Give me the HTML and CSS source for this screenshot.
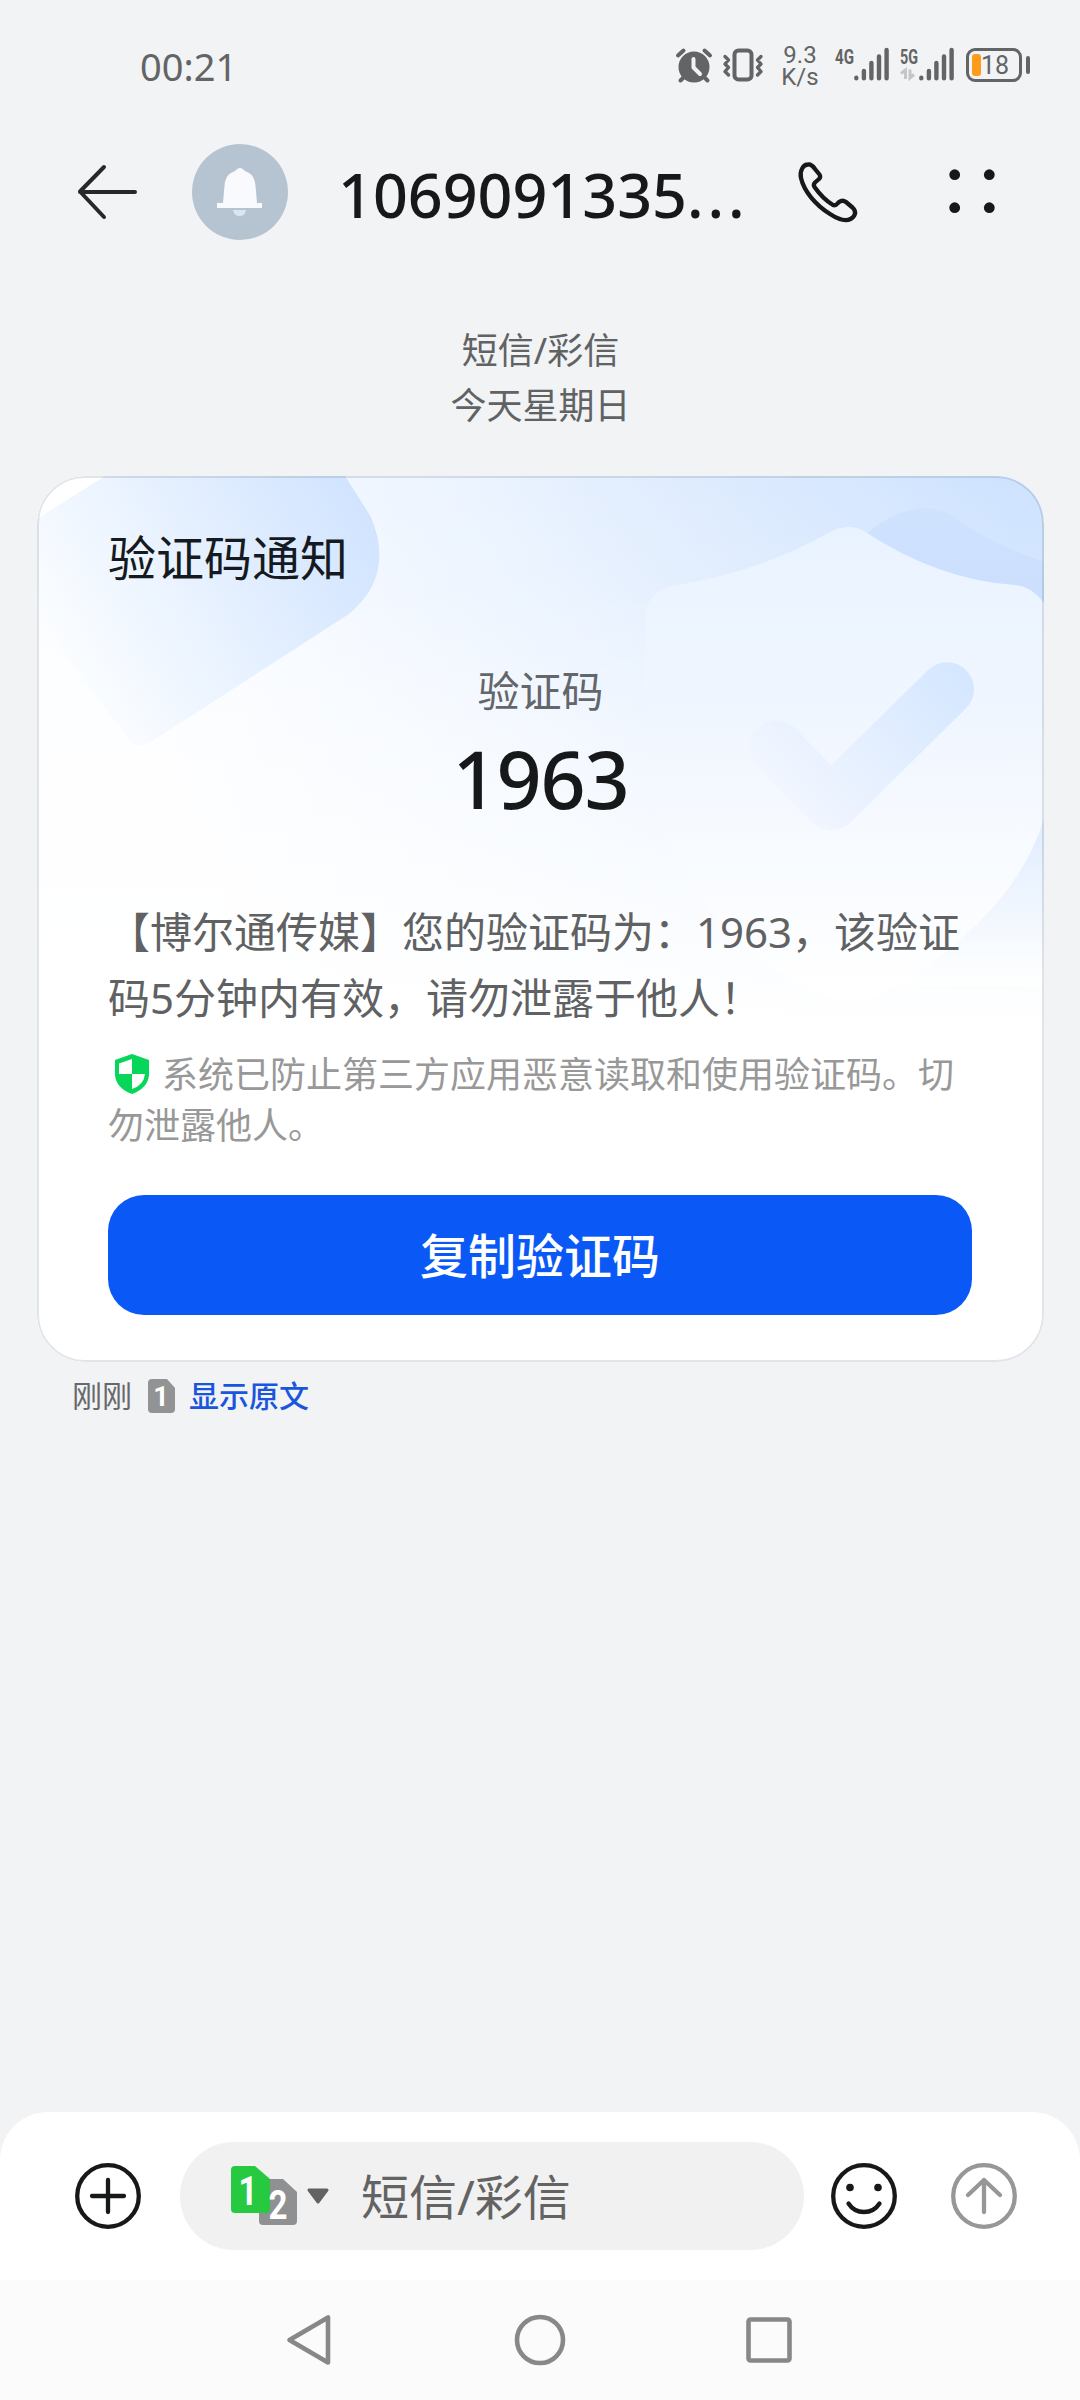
FILE: index.html
```html
<!DOCTYPE html>
<html lang="zh-CN">
<head>
<meta charset="utf-8">
<title>短信</title>
<link rel="stylesheet" href="styles.css">
</head>
<body>
<div class="screen">
  <div class="status">
    <span class="time">00:21</span>
    <div class="status-icons">
      <svg class="alarm" width="36" height="36" viewBox="0 0 36 36">
        <circle cx="18" cy="20" r="15.5" fill="#626465"/>
        <path d="M2 8.5 7.500 3.500M34 8.500 28.500 3.500M8 30 4.500 33.500M28 30 31.500 33.500" stroke="#626465" stroke-width="4" stroke-linecap="round" fill="none"/>
        <path d="M17.500 12V20.500L24 27" stroke="#f1f3f5" stroke-width="4" stroke-linecap="round" stroke-linejoin="round" fill="none"/>
      </svg>
      <svg class="vibrate" width="42" height="36" viewBox="0 0 42 36">
        <rect x="12.500" y="3.500" width="17" height="29" rx="4" fill="none" stroke="#626465" stroke-width="4"/>
        <path d="M3 9.500 6.500 13 3 17 6.500 20.500 3 24.500 6.500 28M39 9.500 35.500 13 39 17 35.500 20.500 39 24.500 35.500 28" fill="none" stroke="#626465" stroke-width="3.400" stroke-linecap="round" stroke-linejoin="round"/>
      </svg>
      <div class="speed"><span>9.3</span><span>K/s</span></div>
      <svg class="signal" width="55" height="36" viewBox="0 0 55 36">
        <text class="net" x="0" y="16.500" textLength="19" lengthAdjust="spacingAndGlyphs">4G</text>
        <path d="M21.300 30.700V31.300M28.900 24V31.300M36.400 16V31.300M44 9.500V31.300M51.600 3V31.300" stroke="#626465" stroke-width="4.400" stroke-linecap="round"/>
      </svg>
      <svg class="signal" width="55" height="36" viewBox="0 0 55 36">
        <text class="net" x="0" y="16.500" textLength="18" lengthAdjust="spacingAndGlyphs">5G</text>
        <path d="M1 26.500 5.500 23V32M10 22.500V31L14 27.500" stroke="#c3c5c7" stroke-width="3" fill="none"/>
        <path d="M21.300 30.700V31.300M28.900 24V31.300M36.400 16V31.300M44 9.500V31.300M51.600 3V31.300" stroke="#626465" stroke-width="4.400" stroke-linecap="round"/>
      </svg>
      <div class="battery"><i class="level"></i><span>18</span></div>
    </div>
  </div>

  <header class="header">
    <svg class="back" width="64" height="60" viewBox="0 0 64 60">
      <path d="M29 5 5 29.500 29 55M5 30H60" fill="none" stroke="#27282a" stroke-width="4" stroke-linecap="round" stroke-linejoin="round"/>
    </svg>
    <svg class="avatar" width="96" height="96" viewBox="0 0 96 96">
      <circle cx="48" cy="48" r="48" fill="#b6c3d1"/>
      <path d="M48 24C51 24 52 27 55 28C61 30 63 36 63.500 42L65 59H70V64H25V59H31L32.500 42C33 36 35 30 41 28C44 27 45 24 48 24Z" fill="#f8fafe"/>
      <path d="M41 66H54Q53 72 47.500 72T41 66Z" fill="#d9e5f6"/>
    </svg>
    <h1 class="number">1069091335<span class="dots">...</span></h1>
    <svg class="phone" width="64" height="64" viewBox="0 0 64 64">
      <path d="M5 18C3.500 11 7 4.500 12 4.500C15.500 4 17 6 19 9L23.500 14.500Q25 17 23 19L19 22.500Q17 24.500 18.500 27Q27 39 37 45Q39.500 46 41.500 43.500L43 42Q46.500 39.500 50 42L56.500 47.500C61.500 52 58.500 57 54.500 59C50 61.500 44 60.500 34 54C19 44.500 8 31 5 18Z" fill="none" stroke="#17181a" stroke-width="4.300" stroke-linejoin="round"/>
    </svg>
    <svg class="more" width="46" height="46" viewBox="0 0 46 46" fill="#17181a">
      <circle cx="5.700" cy="5.700" r="5.400"/><circle cx="40.300" cy="5.700" r="5.400"/><circle cx="5.700" cy="38.700" r="5.400"/><circle cx="40.300" cy="38.700" r="5.400"/>
    </svg>
  </header>

  <main class="thread">
    <div class="meta"><div>短信/彩信</div><div>今天星期日</div></div>

    <section class="card">
      <svg class="art" viewBox="37 476 1007 885" preserveAspectRatio="none">
        <defs>
          <linearGradient id="sky" gradientUnits="userSpaceOnUse" x1="1000" y1="476" x2="150" y2="700">
            <stop offset="0" stop-color="#cfe3ff"/><stop offset=".35" stop-color="#dfecfe"/><stop offset=".6" stop-color="#ecf4ff"/><stop offset="1" stop-color="#fcfdff"/>
          </linearGradient>
          <linearGradient id="fade" x1="0" y1="0" x2="0" y2="1">
            <stop offset="0" stop-color="#fff" stop-opacity="0"/><stop offset=".12" stop-color="#fff" stop-opacity=".12"/><stop offset=".28" stop-color="#fff" stop-opacity=".45"/><stop offset=".62" stop-color="#fff" stop-opacity="1"/>
          </linearGradient>
          <linearGradient id="tile" gradientUnits="userSpaceOnUse" x1="75" y1="680" x2="375" y2="505">
            <stop offset="0" stop-color="#fbfdff"/><stop offset=".5" stop-color="#e5f0ff"/><stop offset="1" stop-color="#d0e3ff"/>
          </linearGradient>
          <linearGradient id="rear" gradientUnits="userSpaceOnUse" x1="0" y1="510" x2="0" y2="985">
            <stop offset="0" stop-color="#cfe2fe"/><stop offset=".2" stop-color="#cbdffe"/><stop offset=".7" stop-color="#e4effe"/><stop offset="1" stop-color="#fff"/>
          </linearGradient>
          <linearGradient id="front" gradientUnits="userSpaceOnUse" x1="0" y1="527" x2="0" y2="990">
            <stop offset="0" stop-color="#e9f3ff"/><stop offset=".4" stop-color="#f0f6ff"/><stop offset=".8" stop-color="#fafcff"/><stop offset="1" stop-color="#fff"/>
          </linearGradient>
          <linearGradient id="tick" gradientUnits="userSpaceOnUse" x1="800" y1="800" x2="950" y2="665">
            <stop offset="0" stop-color="#f0f5ff"/><stop offset="1" stop-color="#d5e7ff"/>
          </linearGradient>
        </defs>
        <rect x="37" y="476" width="1007" height="885" fill="url(#sky)"/>
        <rect x="37" y="476" width="1007" height="885" fill="url(#fade)"/>
        <path d="M37 476H105L37 519Z" fill="#fff"/>
        <path d="M37 519 105 476H345L371 517Q395 575 350 613L152 741Q137 750 128 738L37 618Z" fill="url(#tile)"/>
        <path d="M866 534Q895 509 926 508Q942 508 958 520Q1002 550 1050 563V985H880Z" fill="url(#rear)"/>
        <path d="M672 586Q760 572 832 531Q849 523 864 531Q938 580 1015 585Q1034 586 1050 611V790Q1036 890 920 970L880 994Q847 1010 800 985Q650 890 645 740V615Q648 592 672 586Z" fill="url(#front)"/>
        <path d="M776 747 831 803 947 689" fill="none" stroke="url(#tick)" stroke-width="54" stroke-linecap="round" stroke-linejoin="round"/>
      </svg>
      <h2 class="card-title">验证码通知</h2>
      <p class="label">验证码</p>
      <p class="code">1963</p>
      <p class="body">【博尔通传媒】您的验证码为：1963，该验证<br>码5分钟内有效，请勿泄露于他人！</p>
      <p class="notice"><svg class="shield" width="36" height="40" viewBox="0 0 36 40"><path d="M18 0 35 6V21Q34 34 18 40Q2 34 1 21V6Z" fill="#06d65a"/><path d="M18 5V20H5V9.500ZM18 20H31Q30 31 18 35Z" fill="#fff"/></svg>系统已防止第三方应用恶意读取和使用验证码。切<br>勿泄露他人。</p>
      <button class="copy">复制验证码</button>
    </section>

    <div class="foot">
      <span>刚刚</span>
      <svg class="sim" width="27" height="34" viewBox="0 0 27 34"><path d="M4 0H19L27 9V30Q27 34 23 34H4Q0 34 0 30V4Q0 0 4 0Z" fill="#919394"/><text x="13" y="27" text-anchor="middle" class="sim-small">1</text></svg>
      <a class="link">显示原文</a>
    </div>
  </main>

  <div class="composer">
    <svg class="add" width="66" height="66" viewBox="0 0 66 66"><circle cx="33" cy="33" r="30.800"/><path d="M33 17V49M17 33H49"/></svg>
    <div class="field">
      <svg class="sims" width="68" height="62" viewBox="0 0 68 62">
        <path d="M32 14H52L66 27V56Q66 60 62 60H32Q28 60 28 56V18Q28 14 32 14Z" fill="#8f9091"/>
        <path d="M4 1H24L39 14V44Q39 48 35 48H4Q0 48 0 44V5Q0 1 4 1Z" fill="#27c940"/>
        <text class="sim-num" x="17" y="40" text-anchor="middle" textLength="19" lengthAdjust="spacingAndGlyphs">1</text>
        <text class="sim-num" x="47" y="53.500" text-anchor="middle" textLength="19" lengthAdjust="spacingAndGlyphs">2</text>
      </svg>
      <svg class="caret" width="22" height="16" viewBox="0 0 22 16"><path d="M2 2H20L11 14Z" fill="#636363" stroke="#636363" stroke-width="3" stroke-linejoin="round"/></svg>
      <span class="placeholder">短信/彩信</span>
    </div>
    <svg class="smile" width="66" height="66" viewBox="0 0 66 66"><circle cx="33" cy="33" r="30.800"/><path d="M17.500 40.500Q23 49 33 49T48.500 40.500"/><circle class="eye" cx="19" cy="24.500" r="3.800"/><circle class="eye" cx="47" cy="24.500" r="3.800"/></svg>
    <svg class="send" width="66" height="66" viewBox="0 0 66 66"><circle cx="33" cy="33" r="30.800"/><path d="M33 49V17M17 32 33 17 49 32"/></svg>
  </div>

  <nav class="nav">
    <svg width="52" height="52" viewBox="0 0 52 52"><path d="M43 3.500V48.500L4.500 26Z"/></svg>
    <svg width="52" height="52" viewBox="0 0 52 52"><circle cx="26" cy="26" r="23"/></svg>
    <svg width="52" height="52" viewBox="0 0 52 52"><rect x="5.500" y="5.500" width="41" height="41" rx="2"/></svg>
  </nav>
</div>
</body>
</html>
```
FILE: styles.css
```css
* { box-sizing: border-box; }
body, h1, h2, p { margin: 0; font-weight: 400; }
body { background: #f1f3f5; }
svg { display: block; flex: none; overflow: visible; }

.screen {
  width: 1080px;
  height: 2400px;
  display: flex;
  flex-direction: column;
  background: #f1f3f5;
  font-family: "Noto Sans", "Noto Sans CJK SC", sans-serif;
  overflow: hidden;
}

.status {
  height: 130px;
  padding: 0 49px 0 140px;
  display: flex;
  align-items: center;
  justify-content: space-between;
  color: #626465;
}
.time { font-size: 38px; line-height: 40px; padding-top: 1px; }
.status-icons { display: flex; align-items: center; }
.vibrate { margin-left: 10px; }
.speed {
  width: 38px;
  margin-left: 17px;
  padding-top: 1px;
  display: flex;
  flex-direction: column;
  align-items: center;
  font: 24px/22px Roboto, sans-serif;
}
.signal { margin-left: 16px; }
.signal + .signal { margin-left: 10px; }
.net { font: 700 21px "Roboto", sans-serif; fill: #626465; }
.battery {
  position: relative;
  width: 56px;
  height: 34px;
  margin: 0 9px 0 11px;
  padding-left: 3px;
  border: 3px solid #626465;
  border-radius: 9px;
  display: flex;
  align-items: center;
  font: 25px/26px Roboto, sans-serif;
}
.battery span { padding-top: 2px; }
.battery::after {
  content: "";
  position: absolute;
  right: -11px;
  top: 5px;
  width: 4.500px;
  height: 18px;
  border-radius: 3px;
  background: #626465;
}
.level { width: 9px; height: 22px; border-radius: 3px; background: #fd9c1c; }

.header {
  height: 124px;
  padding-left: 75px;
  display: flex;
  align-items: center;
}
.avatar { margin-left: 53px; }
.number {
  width: 417px;
  margin-left: 50px;
  font-size: 61px;
  font-weight: 500;
  line-height: 80px;
  color: #17181a;
  white-space: nowrap;
  padding-top: 5px;
}
.dots { letter-spacing: 4px; }
.phone { margin-left: 41px; }
.more { margin: 0 0 0 89px; }

.thread { flex: 1; padding: 69px 36px 0 37px; }
.meta { text-align: center; font-size: 36px; line-height: 55px; color: #606264; }

.card {
  position: relative;
  width: 1007px;
  height: 886px;
  margin-top: 43px;
  padding: 52px 71px 0;
  border-radius: 48px;
  background: #fff;
  overflow: hidden;
}
.card > * { position: relative; }
.card > .art { position: absolute; inset: 0; width: 100%; height: 100%; }
.card::after {
  content: "";
  position: absolute;
  inset: 0;
  border: 2px solid rgba(20, 40, 60, .12);
  border-radius: 48px;
}
.card-title { font-size: 48px; line-height: 60px; color: #151a20; }
.label { margin-top: 78px; text-align: center; font-size: 42px; line-height: 50px; color: #63666b; }
.code { margin-top: 18px; text-align: center; font-size: 79px; font-weight: 500; line-height: 90px; letter-spacing: -1.200px; color: #17181a; }
.body { margin-top: 75px; font-size: 42px; line-height: 66px; color: #606163; white-space: nowrap; }
.notice { margin-top: 18px; font-size: 36px; line-height: 51px; color: #989898; white-space: nowrap; }
.shield { display: inline-block; margin: 0 12px 0 6px; vertical-align: -6px; }
.copy {
  display: block;
  width: 864px;
  height: 120px;
  margin-top: 44px;
  padding: 2px 0 0;
  border: 0;
  border-radius: 36px;
  background: #0a59f7;
  color: #fff;
  font: 500 48px/118px "Noto Sans", "Noto Sans CJK SC", sans-serif;
}

.foot {
  display: flex;
  align-items: center;
  height: 40px;
  margin: 14px 0 0 35px;
  font-size: 30px;
  line-height: 40px;
  color: #66686a;
}
.sim { margin: 0 14px 0 16px; }
.sim-small { font: 700 27px Roboto, sans-serif; fill: #fff; }
.link { font-weight: 500; color: #1a56dc; }

.composer {
  height: 168px;
  padding-left: 75px;
  display: flex;
  align-items: center;
  background: #fff;
  border-radius: 48px 48px 0 0;
}
.add, .smile, .send {
  fill: none;
  stroke: #17181a;
  stroke-width: 4.300px;
  stroke-linecap: round;
  stroke-linejoin: round;
}
.send { margin-left: 54px; stroke: #979797; }
.eye { fill: #17181a; stroke: none; }
.field {
  width: 624px;
  height: 108px;
  margin: 0 27px 0 39px;
  padding-left: 51px;
  border-radius: 54px;
  background: #f1f1f2;
  display: flex;
  align-items: center;
}
.sim-num { font: 700 40px Roboto, sans-serif; fill: #fff; }
.caret { margin-left: 8px; }
.placeholder { margin-left: 32px; padding-top: 2px; font-size: 48px; line-height: 70px; color: #636363; }

.nav {
  height: 120px;
  padding: 0 285px;
  display: flex;
  align-items: center;
  justify-content: space-between;
  background: #fbfbfc;
  fill: none;
  stroke: #888;
  stroke-width: 4.600px;
  stroke-linejoin: round;
}
```
